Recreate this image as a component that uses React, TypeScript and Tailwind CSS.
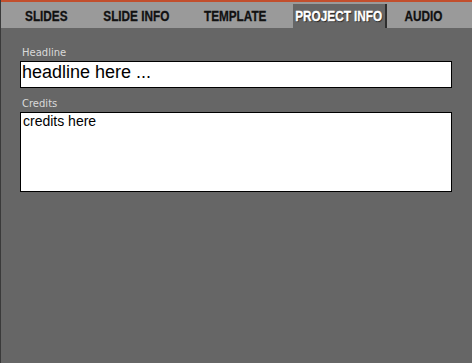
import React from "react";

const tabFont = {
  fontFamily: '"Liberation Sans", Arial, sans-serif',
};

function Tab({ label, w, active }: { label: string; w: string; active?: boolean }) {
  return (
    <div
      className={
        active
          ? `${w} h-[24px] flex items-center justify-center bg-[#666] border-r-2 border-[#2e2e2e]`
          : `${w} h-[24px] flex items-center justify-center`
      }
    >
      <span
        style={tabFont}
        className={
          active
            ? "inline-block whitespace-nowrap scale-x-[0.84] font-bold text-[14px] leading-[24px] text-white [-webkit-text-stroke:0.3px_#fff] [text-shadow:1px_1px_1px_#222]"
            : "inline-block whitespace-nowrap scale-x-[0.84] font-bold text-[14px] leading-[24px] text-[#111] [-webkit-text-stroke:0.3px_#111]"
        }
      >
        {label}
      </span>
    </div>
  );
}

export default function App() {
  return (
    <div className="w-[472px] h-[363px] bg-[#666] border-l border-[#3a3a3a] flex flex-col overflow-hidden">
      <div className="h-[2px] bg-[#c24f2d]" />
      <div className="h-[26px] bg-[#9a9a9a] flex items-end">
        <Tab label="SLIDES" w="w-[90px]" />
        <Tab label="SLIDE INFO" w="w-[90px]" />
        <Tab label="TEMPLATE" w="w-[108px]" />
        <div className="w-[4px]" />
        <Tab label="PROJECT INFO" w="w-[94px]" active />
        <Tab label="AUDIO" w="w-[73px]" />
      </div>
      <div className="pl-[19px] pt-[19px] flex flex-col">
        <div className="h-[12px] leading-[12px] text-[10px] text-[#dadada] pl-[2px]" style={{ fontFamily: '"DejaVu Sans", Verdana, sans-serif' }}>
          Headline
        </div>
        <div className="mt-[2px] w-[432px] h-[27px] bg-white border border-black pl-[1px]">
          <div className="text-[18px] leading-[20px] text-black" style={{ fontFamily: '"Liberation Sans", Arial, sans-serif' }}>
            headline here ...
          </div>
        </div>
        <div className="mt-[10px] h-[12px] leading-[12px] text-[10px] text-[#dadada] pl-[2px]" style={{ fontFamily: '"DejaVu Sans", Verdana, sans-serif' }}>
          Credits
        </div>
        <div className="mt-[2px] w-[432px] h-[80px] bg-white border border-black pl-[2px]">
          <div className="text-[14px] leading-[16px] text-black" style={{ fontFamily: '"Liberation Sans", Arial, sans-serif' }}>
            credits here
          </div>
        </div>
      </div>
    </div>
  );
}
